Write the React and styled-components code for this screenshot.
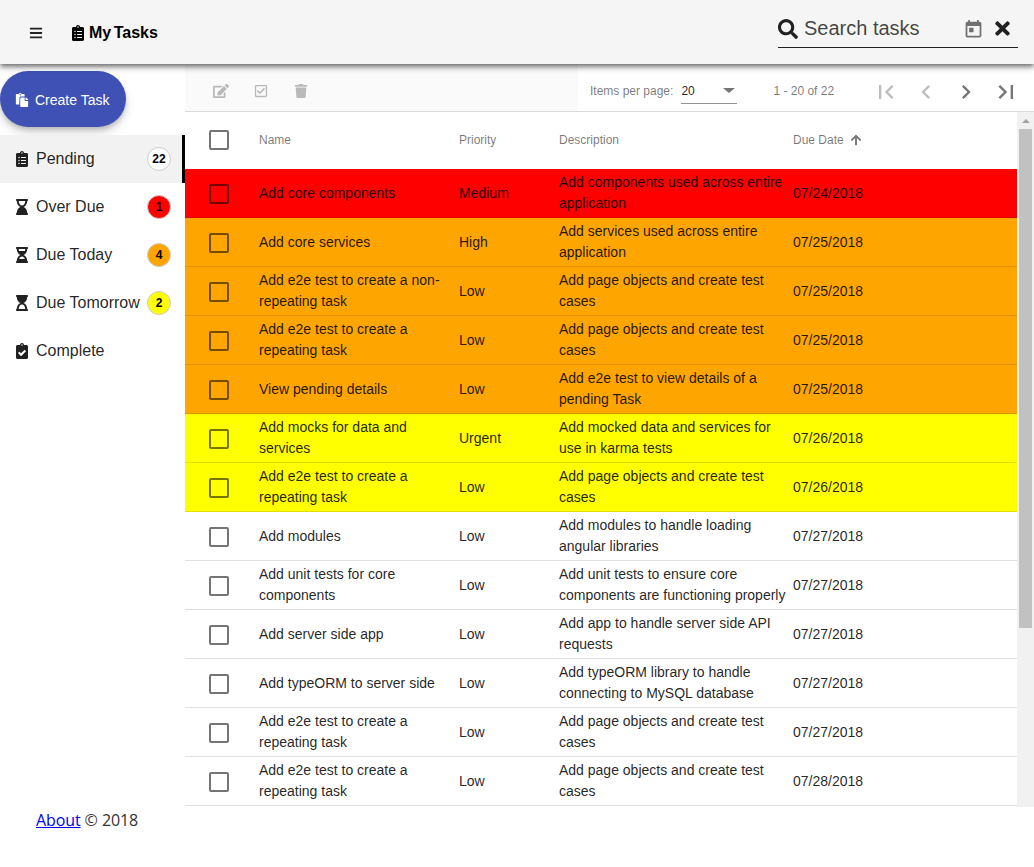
import React from "react";
import styled, { createGlobalStyle } from "styled-components";
import {
  FaArrowUp,
  FaBars,
  FaClipboardCheck,
  FaClipboardList,
  FaEdit,
  FaHourglassEnd,
  FaHourglassHalf,
  FaHourglassStart,
  FaPaste,
  FaRegCheckSquare,
  FaSearch,
  FaTimes,
  FaTrash,
} from "react-icons/fa";
import {
  MdChevronLeft,
  MdChevronRight,
  MdFirstPage,
  MdLastPage,
  MdToday,
} from "react-icons/md";

const GlobalStyle = createGlobalStyle`
  html, body {
    margin: 0;
    height: 100%;
    background: #fff;
    overflow: hidden;
    font-family: "Liberation Sans", Arial, sans-serif;
  }
`;

const Page = styled.div`
  height: 867px;
  display: flex;
  flex-direction: column;
`;

const Header = styled.header`
  position: relative;
  z-index: 2;
  height: 64px;
  flex: none;
  display: flex;
  align-items: center;
  justify-content: space-between;
  padding: 0 16px 0 29px;
  background: #f5f5f5;
  box-shadow: 0 2px 4px -1px rgba(0, 0, 0, 0.4), 0 4px 5px 0 rgba(0, 0, 0, 0.28),
    0 1px 10px 0 rgba(0, 0, 0, 0.12);
`;

const Brand = styled.div`
  display: flex;
  align-items: center;
  margin-top: 2px;
  color: #000;
  font-size: 16px;
  font-weight: bold;
  word-spacing: -2px;
`;

const MenuIcon = styled(FaBars)`
  font-size: 14px;
  color: #212121;
  margin-right: 27px;
`;

const BrandIcon = styled(FaClipboardList)`
  font-size: 16px;
  margin-right: 3px;
`;

const Search = styled.div`
  width: 240px;
  height: 37px;
  margin-top: -5px;
  padding-bottom: 1px;
  display: flex;
  align-items: center;
  border-bottom: 1px solid #212121;
  box-sizing: border-box;
  color: rgba(0, 0, 0, 0.87);
`;

const SearchInput = styled.input`
  flex: 1;
  min-width: 0;
  margin-left: 6px;
  border: 0;
  outline: 0;
  padding: 0;
  background: transparent;
  font: 20px "Liberation Sans", Arial, sans-serif;
  &::placeholder {
    color: rgba(0, 0, 0, 0.74);
    opacity: 1;
  }
`;

const CalendarIcon = styled(MdToday)`
  font-size: 21px;
  color: rgba(0, 0, 0, 0.54);
  margin-top: 2px;
  margin-right: 8px;
`;

const ClearIcon = styled(FaTimes)`
  font-size: 21px;
  color: #212121;
  margin-right: 5px;
`;

const Body = styled.div`
  flex: 1;
  min-height: 0;
  display: flex;
`;

const Sidebar = styled.aside`
  width: 185px;
  flex: none;
  display: flex;
  flex-direction: column;
`;

const CreateButton = styled.button`
  width: 126px;
  height: 56px;
  margin-top: 7px;
  padding: 2px 0 0 15px;
  display: flex;
  align-items: center;
  gap: 6px;
  border: 0;
  border-radius: 28px;
  background: #3f51b5;
  color: #fff;
  font: 14px "Liberation Sans", Arial, sans-serif;
  box-shadow: 0 3px 5px -1px rgba(0, 0, 0, 0.2), 0 6px 10px 0 rgba(0, 0, 0, 0.14);
`;

const NavList = styled.nav`
  margin-top: 8px;
  flex: 1;
`;

const NavItem = styled.div`
  height: 48px;
  box-sizing: border-box;
  display: flex;
  align-items: center;
  padding-left: 16px;
  padding-right: ${(p) => (p.$active ? "11px" : "14px")};
  font-size: 16px;
  color: rgba(0, 0, 0, 0.87);
  background: ${(p) => (p.$active ? "#f2f2f2" : "transparent")};
  border-right: ${(p) => (p.$active ? "3px solid #000" : "0")};
`;

const NavIcon = styled.span`
  width: 20px;
  flex: none;
  display: flex;
  font-size: 16px;
  color: #212121;
  svg {
    margin-left: -2px;
  }
`;

const NavLabel = styled.span`
  flex: 1;
  white-space: nowrap;
`;

const Badge = styled.span`
  width: 24px;
  height: 24px;
  box-sizing: border-box;
  display: flex;
  align-items: center;
  justify-content: center;
  border-radius: 50%;
  border: 1px solid #ccc;
  background: ${(p) => p.$color};
  color: #000;
  font-size: 12px;
  font-weight: bold;
`;

const Footer = styled.footer`
  height: 60px;
  flex: none;
  padding-left: 36px;
  font: 16px/27px "Open Sans", sans-serif;
  letter-spacing: -0.1px;
  color: #333;
`;

const Main = styled.main`
  flex: 1;
  min-width: 0;
  display: flex;
  flex-direction: column;
`;

const ToolRow = styled.div`
  height: 48px;
  flex: none;
  box-sizing: border-box;
  display: flex;
  border-bottom: 1px solid #d9d9d9;
`;

const Actions = styled.div`
  width: 393px;
  box-sizing: border-box;
  padding: 7px 0 0 28px;
  display: flex;
  align-items: center;
  background: #fafafa;
  color: rgba(0, 0, 0, 0.26);
`;

const ActionSlot = styled.span`
  width: 41px;
  display: flex;
`;

const TrashIcon = styled(FaTrash)`
  font-size: 14px;
  margin-left: -1px;
`;

const Paginator = styled.div`
  flex: 1;
  padding: 7px 8px 0 12px;
  display: flex;
  align-items: center;
  font-size: 12px;
  color: rgba(0, 0, 0, 0.54);
`;

const PageSize = styled.div`
  width: 56px;
  height: 25px;
  margin-left: 8px;
  margin-right: 36px;
  box-sizing: border-box;
  display: flex;
  align-items: center;
  justify-content: space-between;
  padding: 0 2px 0 0;
  border-bottom: 1px solid rgba(0, 0, 0, 0.42);
  color: rgba(0, 0, 0, 0.87);
`;

const Caret = styled.span`
  width: 0;
  height: 0;
  border-left: 6px solid transparent;
  border-right: 6px solid transparent;
  border-top: 5px solid rgba(0, 0, 0, 0.54);
`;

const PageRange = styled.span`
  flex: 1;
`;

const PageButton = styled.span`
  width: 40px;
  height: 40px;
  margin-top: 2px;
  display: flex;
  align-items: center;
  justify-content: center;
  font-size: 28px;
  color: ${(p) => (p.$disabled ? "rgba(0,0,0,0.26)" : "rgba(0,0,0,0.54)")};
`;

const TableArea = styled.div`
  flex: 1;
  min-height: 0;
  display: flex;
`;

const Table = styled.div`
  flex: 1;
  min-width: 0;
`;

const Grid = styled.div`
  display: grid;
  grid-template-columns: 74px 200px 100px 234px 1fr;
  align-items: center;
  box-sizing: border-box;
`;

const HeadRow = styled(Grid)`
  height: 57px;
  padding-bottom: 1px;
  font-size: 12px;
  color: rgba(0, 0, 0, 0.54);
`;

const SortLabel = styled.span`
  display: flex;
  align-items: center;
  gap: 6px;
`;

const Row = styled(Grid)`
  height: 49px;
  background: ${(p) => p.$bg};
  border-bottom: 1px solid rgba(0, 0, 0, 0.12);
  font-size: 14px;
  line-height: 21px;
  color: rgba(0, 0, 0, 0.87);
`;

const HeadCheck = styled.span`
  width: 20px;
  height: 20px;
  margin-left: 24px;
  box-sizing: border-box;
  border: 2px solid rgba(0, 0, 0, 0.54);
  border-radius: 2px;
`;

const RowCheck = styled(HeadCheck)`
  margin-top: 2px;
`;

const NameCell = styled.span`
  padding-right: 16px;
`;

const Scrollbar = styled.div`
  width: 17px;
  flex: none;
  height: 695px;
  display: flex;
  flex-direction: column;
  align-items: center;
  background: #f1f1f1;
`;

const ScrollArrow = styled.span`
  height: 17px;
  flex: none;
  display: flex;
  align-items: center;
  &::before {
    content: "";
    border-left: 4px solid transparent;
    border-right: 4px solid transparent;
    border-bottom: 4px solid #a3a3a3;
  }
`;

const ScrollThumb = styled.span`
  width: 13px;
  height: 499px;
  background: #c1c1c1;
`;

const colors = { red: "#ff0000", orange: "#ffa500", yellow: "#ffff00", white: "#fff" };

const navItems = [
  { label: "Pending", icon: <FaClipboardList />, count: 22, color: "#fff", active: true },
  { label: "Over Due", icon: <FaHourglassEnd />, count: 1, color: colors.red },
  { label: "Due Today", icon: <FaHourglassHalf />, count: 4, color: colors.orange },
  { label: "Due Tomorrow", icon: <FaHourglassStart />, count: 2, color: colors.yellow },
  { label: "Complete", icon: <FaClipboardCheck /> },
];

const repeating = "Add e2e test to create a repeating task";
const pageObjects = "Add page objects and create test cases";

const tasks = [
  ["Add core components", "Medium", "Add components used across entire application", "07/24/2018", "red"],
  ["Add core services", "High", "Add services used across entire application", "07/25/2018", "orange"],
  ["Add e2e test to create a non-repeating task", "Low", pageObjects, "07/25/2018", "orange"],
  [repeating, "Low", pageObjects, "07/25/2018", "orange"],
  ["View pending details", "Low", "Add e2e test to view details of a pending Task", "07/25/2018", "orange"],
  ["Add mocks for data and services", "Urgent", "Add mocked data and services for use in karma tests", "07/26/2018", "yellow"],
  [repeating, "Low", pageObjects, "07/26/2018", "yellow"],
  ["Add modules", "Low", "Add modules to handle loading angular libraries", "07/27/2018", "white"],
  ["Add unit tests for core components", "Low", "Add unit tests to ensure core components are functioning properly", "07/27/2018", "white"],
  ["Add server side app", "Low", "Add app to handle server side API requests", "07/27/2018", "white"],
  ["Add typeORM to server side", "Low", "Add typeORM library to handle connecting to MySQL database", "07/27/2018", "white"],
  [repeating, "Low", pageObjects, "07/27/2018", "white"],
  [repeating, "Low", pageObjects, "07/28/2018", "white"],
];

function App() {
  return (
    <Page>
      <GlobalStyle />
      <Header>
        <Brand>
          <MenuIcon />
          <BrandIcon />
          My Tasks
        </Brand>
        <Search>
          <FaSearch size={20} color="#212121" />
          <SearchInput placeholder="Search tasks" />
          <CalendarIcon />
          <ClearIcon />
        </Search>
      </Header>
      <Body>
        <Sidebar>
          <CreateButton>
            <FaPaste size={14} />
            Create Task
          </CreateButton>
          <NavList>
            {navItems.map((item) => (
              <NavItem key={item.label} $active={item.active}>
                <NavIcon>{item.icon}</NavIcon>
                <NavLabel>{item.label}</NavLabel>
                {item.count && <Badge $color={item.color}>{item.count}</Badge>}
              </NavItem>
            ))}
          </NavList>
          <Footer>
            <a href="#about">About</a> © 2018
          </Footer>
        </Sidebar>
        <Main>
          <ToolRow>
            <Actions>
              <ActionSlot>
                <FaEdit size={16} />
              </ActionSlot>
              <ActionSlot>
                <FaRegCheckSquare size={14} />
              </ActionSlot>
              <ActionSlot>
                <TrashIcon />
              </ActionSlot>
            </Actions>
            <Paginator>
              Items per page:
              <PageSize>
                20
                <Caret />
              </PageSize>
              <PageRange>1 - 20 of 22</PageRange>
              <PageButton $disabled>
                <MdFirstPage />
              </PageButton>
              <PageButton $disabled>
                <MdChevronLeft />
              </PageButton>
              <PageButton>
                <MdChevronRight />
              </PageButton>
              <PageButton>
                <MdLastPage />
              </PageButton>
            </Paginator>
          </ToolRow>
          <TableArea>
            <Table>
              <HeadRow>
                <HeadCheck />
                <span>Name</span>
                <span>Priority</span>
                <span>Description</span>
                <SortLabel>
                  Due Date
                  <FaArrowUp size={12} />
                </SortLabel>
              </HeadRow>
              {tasks.map(([name, priority, description, due, color], i) => (
                <Row key={i} $bg={colors[color]}>
                  <RowCheck />
                  <NameCell>{name}</NameCell>
                  <span>{priority}</span>
                  <span>{description}</span>
                  <span>{due}</span>
                </Row>
              ))}
            </Table>
            <Scrollbar>
              <ScrollArrow />
              <ScrollThumb />
            </Scrollbar>
          </TableArea>
        </Main>
      </Body>
    </Page>
  );
}

export default App;
